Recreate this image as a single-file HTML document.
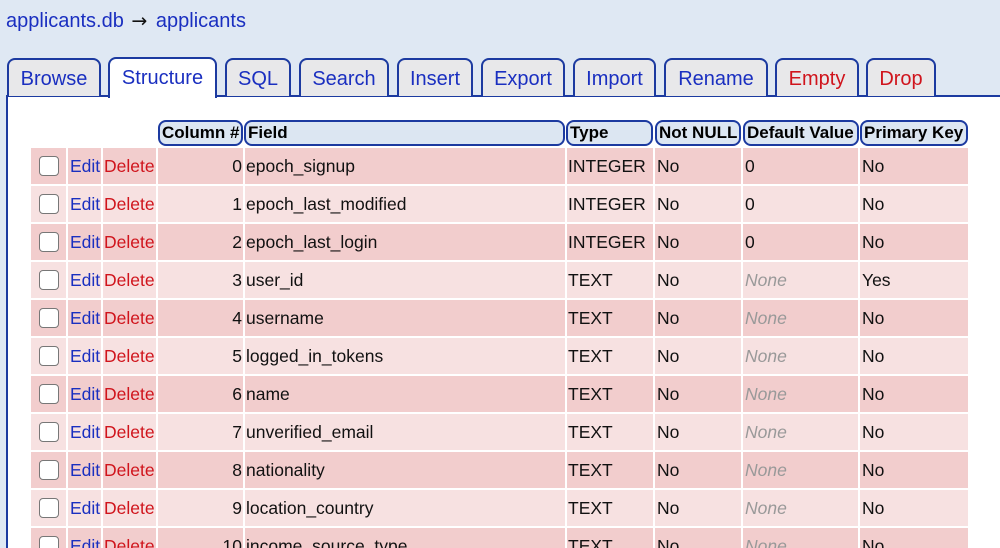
<!DOCTYPE html>
<html><head><meta charset="utf-8"><style>
*{margin:0;padding:0;box-sizing:border-box}
html,body{width:1000px;height:548px;overflow:hidden}
body{background:#dfe8f3;font-family:"Liberation Sans",Arial,sans-serif;position:relative}
.title{position:absolute;left:6px;top:10px;font-size:20px;color:#1a2fc0}
.arr{font-family:"DejaVu Sans",sans-serif;font-size:19px;color:#111;margin:0 3px 0 2px}
.tab{position:absolute;top:58px;height:38px;border:2px solid #1c3aa0;border-bottom:none;border-radius:8px 8px 0 0;background:#e8e8ea;font-size:20px;color:#1a2fc0;text-align:center;line-height:38px}
.tab.act{background:#fff;top:57px;height:41px;z-index:2}
.red{color:#d0141c}
.panel{position:absolute;left:6px;top:95px;width:994px;height:453px;background:#fff;border-left:2px solid #1c3aa0;border-top:2px solid #1c3aa0}
.c{position:absolute;height:36px;line-height:36px;font-size:17.5px;color:#111;white-space:nowrap;overflow:hidden}
.h{position:absolute;top:120px;height:26px;line-height:22px;font-size:17px;font-weight:bold;background:#dce6f2;border:2px solid #1c3aa0;border-radius:8px;padding-left:2px;color:#000;white-space:nowrap;overflow:hidden}
.cb{position:absolute;width:20px;height:20px;border:1.5px solid #777;border-radius:4px;background:#fff}
</style></head><body>
<div class="title">applicants.db <span class="arr">→</span> applicants</div>
<div class="panel"></div>
<div class="tab" style="left:7px;width:94px">Browse</div>
<div class="tab act" style="left:108px;width:109px">Structure</div>
<div class="tab" style="left:225px;width:66px">SQL</div>
<div class="tab" style="left:299px;width:90px">Search</div>
<div class="tab" style="left:397px;width:76px">Insert</div>
<div class="tab" style="left:481px;width:84px">Export</div>
<div class="tab" style="left:573px;width:83px">Import</div>
<div class="tab" style="left:664px;width:104px">Rename</div>
<div class="tab red" style="left:775px;width:84px">Empty</div>
<div class="tab red" style="left:866px;width:70px">Drop</div>

<div class="h" style="left:158px;width:85px">Column #</div>
<div class="h" style="left:244px;width:321px">Field</div>
<div class="h" style="left:566px;width:87px">Type</div>
<div class="h" style="left:655px;width:86px">Not NULL</div>
<div class="h" style="left:743px;width:116px">Default Value</div>
<div class="h" style="left:860px;width:108px">Primary Key</div>

<div id="rows"></div>
<script>
var d=[["epoch_signup","INTEGER","0","No"],["epoch_last_modified","INTEGER","0","No"],["epoch_last_login","INTEGER","0","No"],["user_id","TEXT","","Yes"],["username","TEXT","","No"],["logged_in_tokens","TEXT","","No"],["name","TEXT","","No"],["unverified_email","TEXT","","No"],["nationality","TEXT","","No"],["location_country","TEXT","","No"],["income_source_type","TEXT","","No"]];
var h="";
d.forEach(function(r,i){
var t=148+i*38,bg=i%2?"#f7e1e1":"#f2cdcd";
function cell(x,w,txt,st){h+='<div class="c" style="left:'+x+'px;top:'+t+'px;width:'+w+'px;background:'+bg+';'+(st||'')+'">'+txt+'</div>';}
cell(31,35,"");cell(68,33,"Edit","color:#1a2fc0;padding-left:2px");cell(103,53,"Delete","color:#d0141c;padding-left:1px");
cell(158,85,String(i),"text-align:right;padding-right:1px");
cell(245,320,r[0],"padding-left:1px");cell(567,86,r[1],"padding-left:1px");cell(655,86,"No","padding-left:2px");
cell(743,115,r[2]||"None",r[2]?"padding-left:2px":"padding-left:2px;color:#999;font-style:italic");
cell(860,108,r[3],"padding-left:2px");
h+='<div class="cb" style="left:39px;top:'+(t+8)+'px"></div>';
});
document.getElementById("rows").innerHTML=h;
</script>
</body></html>
